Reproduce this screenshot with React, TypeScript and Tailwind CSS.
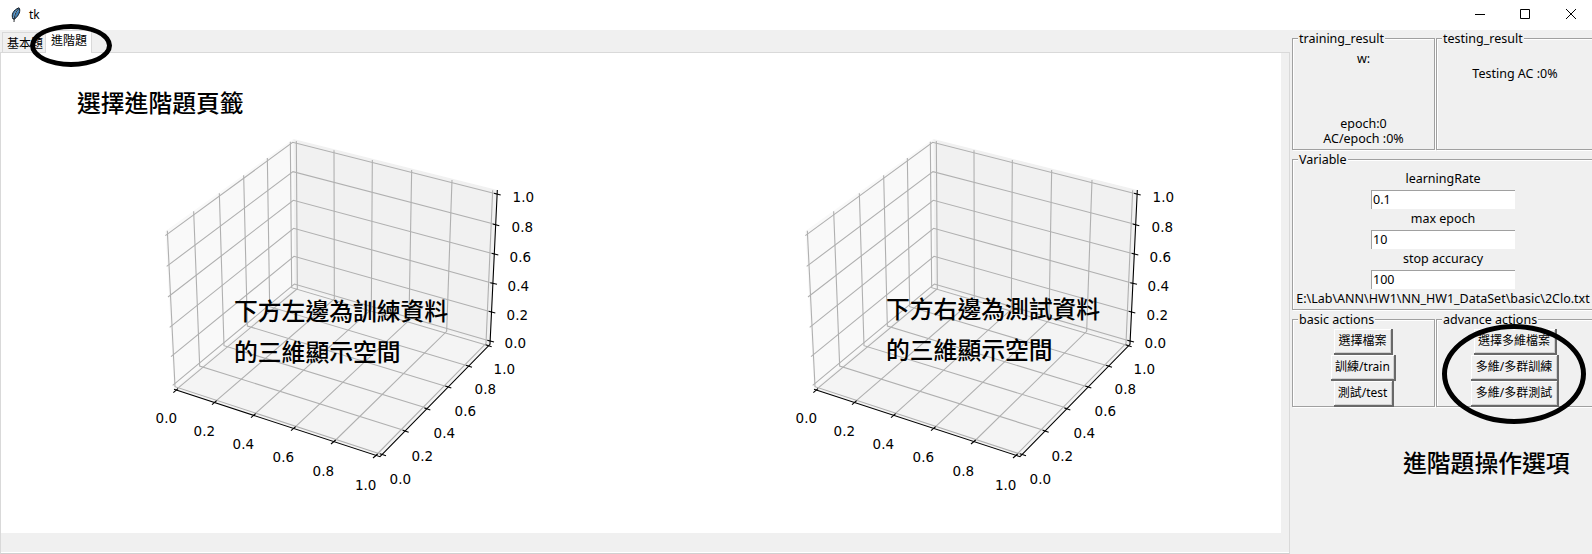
import type { ReactNode } from "react";

const UI = "font-['Noto_Sans','Noto_Sans_CJK_TC',sans-serif]";
const NOTE =
  "absolute whitespace-nowrap font-['Noto_Sans_CJK_TC',sans-serif] text-[23.8px] leading-[41px] font-medium text-black";

type Pt = [number, number];

const GRID: Pt[][] = [
  [[82, 776], [442, 476], [439, 33]],
  [[193, 817], [553, 507], [552, 61]],
  [[310, 856], [664, 538], [667, 90]],
  [[431, 895], [777, 571], [785, 120]],
  [[551, 936], [890, 604], [906, 150]],
  [[676, 978], [1008, 640], [1028, 181]],
  [[52, 302], [75, 770], [693, 973]],
  [[131, 244], [149, 708], [768, 903]],
  [[208, 190], [222, 647], [832, 835]],
  [[281, 136], [292, 588], [894, 771]],
  [[352, 84], [359, 530], [957, 709]],
  [[421, 35], [425, 473], [1016, 647]],
  [[68, 766], [433, 462], [1022, 634]],
  [[63, 680], [432, 379], [1027, 547]],
  [[59, 592], [431, 295], [1033, 461]],
  [[54, 501], [430, 211], [1035, 373]],
  [[50, 409], [429, 125], [1040, 284]],
  [[46, 317], [428, 37], [1043, 193]],
];

const X_TICKS: Pt[] = [[77, 782], [193, 818], [310, 857], [430, 896], [550, 936], [676, 978]];
const Y_TICKS: Pt[] = [[699, 974], [767, 904], [832, 837], [895, 771], [957, 709], [1016, 647]];
const Z_TICKS: Pt[] = [[1022, 634], [1026, 547], [1031, 461], [1035, 373], [1038, 285], [1042, 193]];
const X_LABELS: Pt[] = [[49, 864], [163, 904], [280, 942], [400, 981], [520, 1024], [647, 1065]];
const Y_LABELS: Pt[] = [[751, 1048], [817, 979], [883, 910], [946, 844], [1006, 778], [1063, 717]];
const Z_LABELS: Pt[] = [[1096, 640], [1102, 556], [1105, 468], [1111, 382], [1117, 292], [1120, 202]];

function Plot() {
  return (
    <svg viewBox="0 0 1200 1110" className="block h-[370px] w-[400px]">
      <polygon points="46,304 430,27 433,470 72,778" fill="#f9f9f9" />
      <polygon points="430,27 1042,180 1020,643 433,470" fill="#f1f1f1" />
      <polygon points="72,778 433,470 1020,643 690,980" fill="#f4f4f4" />
      <g fill="none" stroke="#b0b0b0" strokeWidth="3.3">
        {GRID.map((p, i) => (
          <polyline key={i} points={p.join(" ")} />
        ))}
      </g>
      <g fill="none" stroke="#000" strokeWidth="3.3">
        <polyline points="72,778 690,980 1020,643 1042,180" />
        {X_TICKS.map(([x, y], i) => (
          <line key={i} x1={x - 7} y1={y + 6} x2={x + 7} y2={y - 6} />
        ))}
        {Y_TICKS.map(([x, y], i) => (
          <line key={i} x1={x - 9} y1={y - 3} x2={x + 9} y2={y + 3} />
        ))}
        {Z_TICKS.map(([x, y], i) => (
          <line key={i} x1={x - 10} y1={y - 3} x2={x + 10} y2={y + 2} />
        ))}
      </g>
      <g className="font-['DejaVu_Sans',sans-serif]" fontSize="40.5" textAnchor="middle" fill="#000">
        {[X_LABELS, Y_LABELS, Z_LABELS].map((axis, a) =>
          axis.map(([x, y], i) => (
            <text key={`${a}-${i}`} x={x} y={y + 15}>
              {(i / 5).toFixed(1)}
            </text>
          )),
        )}
      </g>
    </svg>
  );
}

function Frame({ label, className, children }: { label: string; className: string; children: ReactNode }) {
  return (
    <div
      className={`flex shrink-0 flex-col items-center border border-[#a0a0a0] shadow-[1px_1px_0_#fff,inset_1px_1px_0_#fff] ${className}`}
    >
      <div className="-mt-[9px] ml-[5px] h-[18px] self-start bg-[#f0f0f0] px-px leading-[18px]">{label}</div>
      {children}
    </div>
  );
}

function Entry({ label, value }: { label: string; value: string }) {
  return (
    <div className="flex flex-col items-center">
      <div className="h-[21px] leading-[20px]">{label}</div>
      <div className="h-[19px] w-[144px] border-t border-l border-[#a0a0a0] bg-white pl-px leading-[18px]">{value}</div>
    </div>
  );
}

function Button({ label, className }: { label: string; className: string }) {
  return (
    <button
      className={`h-[26px] shrink-0 border-r-2 border-b-2 border-r-[#696969] border-b-[#696969] bg-[#f0f0f0] text-[12px] leading-[22px] whitespace-nowrap shadow-[inset_1px_1px_0_#fff,inset_-1px_-1px_0_#d0d0d0] ${className}`}
    >
      {label}
    </button>
  );
}

export default function App() {
  return (
    <div className={`relative flex h-[554px] w-[1592px] flex-col overflow-hidden bg-[#f0f0f0] text-[12.5px] text-black ${UI}`}>
      <header className="flex h-[30px] shrink-0 items-center bg-white">
        <svg viewBox="0 0 12 16" className="ml-[10px] h-4 w-3">
          <path d="M3 12C1 8 3 3 9 .8C11 3 9 9 4.5 12Z" fill="#3f7fb5" stroke="#15181d" strokeWidth="1" />
          <path d="M8 2.5C5.5 5 4.5 8 4 11" fill="none" stroke="#b5dcf5" strokeWidth="1.3" />
          <path d="M8.3 2C5 6 4 10 4 15" fill="none" stroke="#15181d" strokeWidth=".9" />
        </svg>
        <span className="ml-[7px] text-[12px]">tk</span>
        <svg viewBox="0 0 110 16" className="mr-[10px] ml-auto h-4 w-[110px]" fill="none" stroke="#000">
          <path d="M3 7.5H13M48.5 2.5H57.5V11.5H48.5Z" />
          <path d="M94 2L104 12M104 2L94 12" />
        </svg>
      </header>
      <div className="flex min-h-0 flex-1">
        <section className="flex w-[1290px] shrink-0 flex-col">
          <div className="flex h-[22px] items-end pl-[2px] text-[12px]">
            <div className="h-[20px] w-[43px] border-t border-l border-[#d9d9d9] pl-[4px] leading-[21px]">基本題</div>
            <div className="z-10 -mb-px h-[23px] w-[47px] border border-b-0 border-[#d9d9d9] bg-white pl-[5px] leading-[20px]">
              進階題
            </div>
          </div>
          <div className="h-[502px] border border-[#d9d9d9] border-b-[#d0d0d0] shadow-[inset_0_-1px_0_#fff]">
            <div className="flex h-[480px] w-[1280px] bg-white pt-[77px]">
              <div className="w-[640px] shrink-0 pl-[149px]">
                <Plot />
              </div>
              <div className="w-[640px] shrink-0 pl-[149px]">
                <Plot />
              </div>
            </div>
          </div>
        </section>
        <aside className="ml-[2px] flex w-[303px] shrink-0 flex-col pt-[8px]">
          <div className="flex gap-[1px]">
            <Frame label="training_result" className="h-[112px] w-[143px]">
              <div className="mt-[3px] leading-[15px]">w:</div>
              <div className="mt-[50px] leading-[15px]">epoch:0</div>
              <div className="leading-[15px]">AC/epoch :0%</div>
            </Frame>
            <Frame label="testing_result" className="h-[112px] w-[158px]">
              <div className="mt-[18px] leading-[15px]">Testing AC :0%</div>
            </Frame>
          </div>
          <Frame label="Variable" className="mt-[9px] h-[151px] w-[302px]">
            <Entry label="learningRate" value="0.1" />
            <Entry label="max epoch" value="10" />
            <Entry label="stop accuracy" value="100" />
            <div className="leading-[20px] whitespace-nowrap">E:\Lab\ANN\HW1\NN_HW1_DataSet\basic\2Clo.txt</div>
          </Frame>
          <div className="mt-[9px] flex gap-[1px]">
            <Frame label="basic actions" className="h-[88px] w-[143px]">
              <Button label="選擇檔案" className="w-[59px]" />
              <Button label="訓練/train" className="w-[65px]" />
              <Button label="測試/test" className="w-[60px]" />
            </Frame>
            <Frame label="advance actions" className="h-[88px] w-[158px]">
              <Button label="選擇多維檔案" className="w-[83px]" />
              <Button label="多維/多群訓練" className="w-[88px]" />
              <Button label="多維/多群測試" className="w-[88px]" />
            </Frame>
          </div>
        </aside>
      </div>

      <div className="absolute top-[24px] left-[30px] z-20 h-[43px] w-[82px] rounded-[50%] border-[5px] border-black" />
      <div className="absolute top-[324px] left-[1442px] z-20 h-[100px] w-[144px] rounded-[50%] border-[5px] border-black" />
      <p className={`${NOTE} top-[81px] left-[77px]`}>選擇進階題頁籤</p>
      <p className={`${NOTE} top-[289px] left-[234px]`}>
        下方左邊為訓練資料
        <br />
        的三維顯示空間
      </p>
      <p className={`${NOTE} top-[287px] left-[886px]`}>
        下方右邊為測試資料
        <br />
        的三維顯示空間
      </p>
      <p className={`${NOTE} top-[441px] left-[1403px]`}>進階題操作選項</p>
    </div>
  );
}
